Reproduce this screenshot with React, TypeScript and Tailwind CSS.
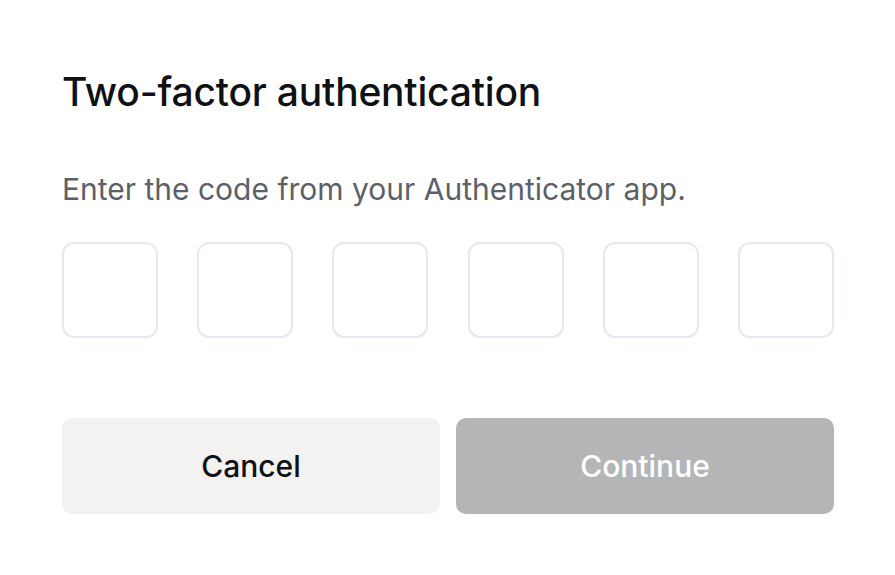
export default function App() {
  return (
    <div className="w-[895px] h-[575px] bg-white" style={{ fontFamily: "Inter, 'Liberation Sans', sans-serif" }}>
      <div className="pl-[62px] pr-[61px] pt-[70px]">
        <h1 className="text-[39px] leading-[44px] font-medium text-[#0f1114] tracking-[-0.2px]">Two-factor authentication</h1>
        <p className="mt-[57px] text-[30px] leading-[36px] text-[#5c6168]">Enter the code from your Authenticator app.</p>
        <div className="mt-[35px] flex justify-between">
          {[0, 1, 2, 3, 4, 5].map((i) => (
            <div key={i} className="w-[96px] h-[96px] rounded-[12px] border-2 border-[#e5e8ee] bg-white" />
          ))}
        </div>
        <div className="mt-[80px] flex gap-[16px]">
          <button className="flex-1 h-[96px] rounded-[10px] bg-[#f3f2f1] text-[30px] font-medium text-[#0f1114]">Cancel</button>
          <button className="flex-1 h-[96px] rounded-[10px] bg-[#b4b5b7] text-[30px] font-medium text-white">Continue</button>
        </div>
      </div>
    </div>
  );
}
